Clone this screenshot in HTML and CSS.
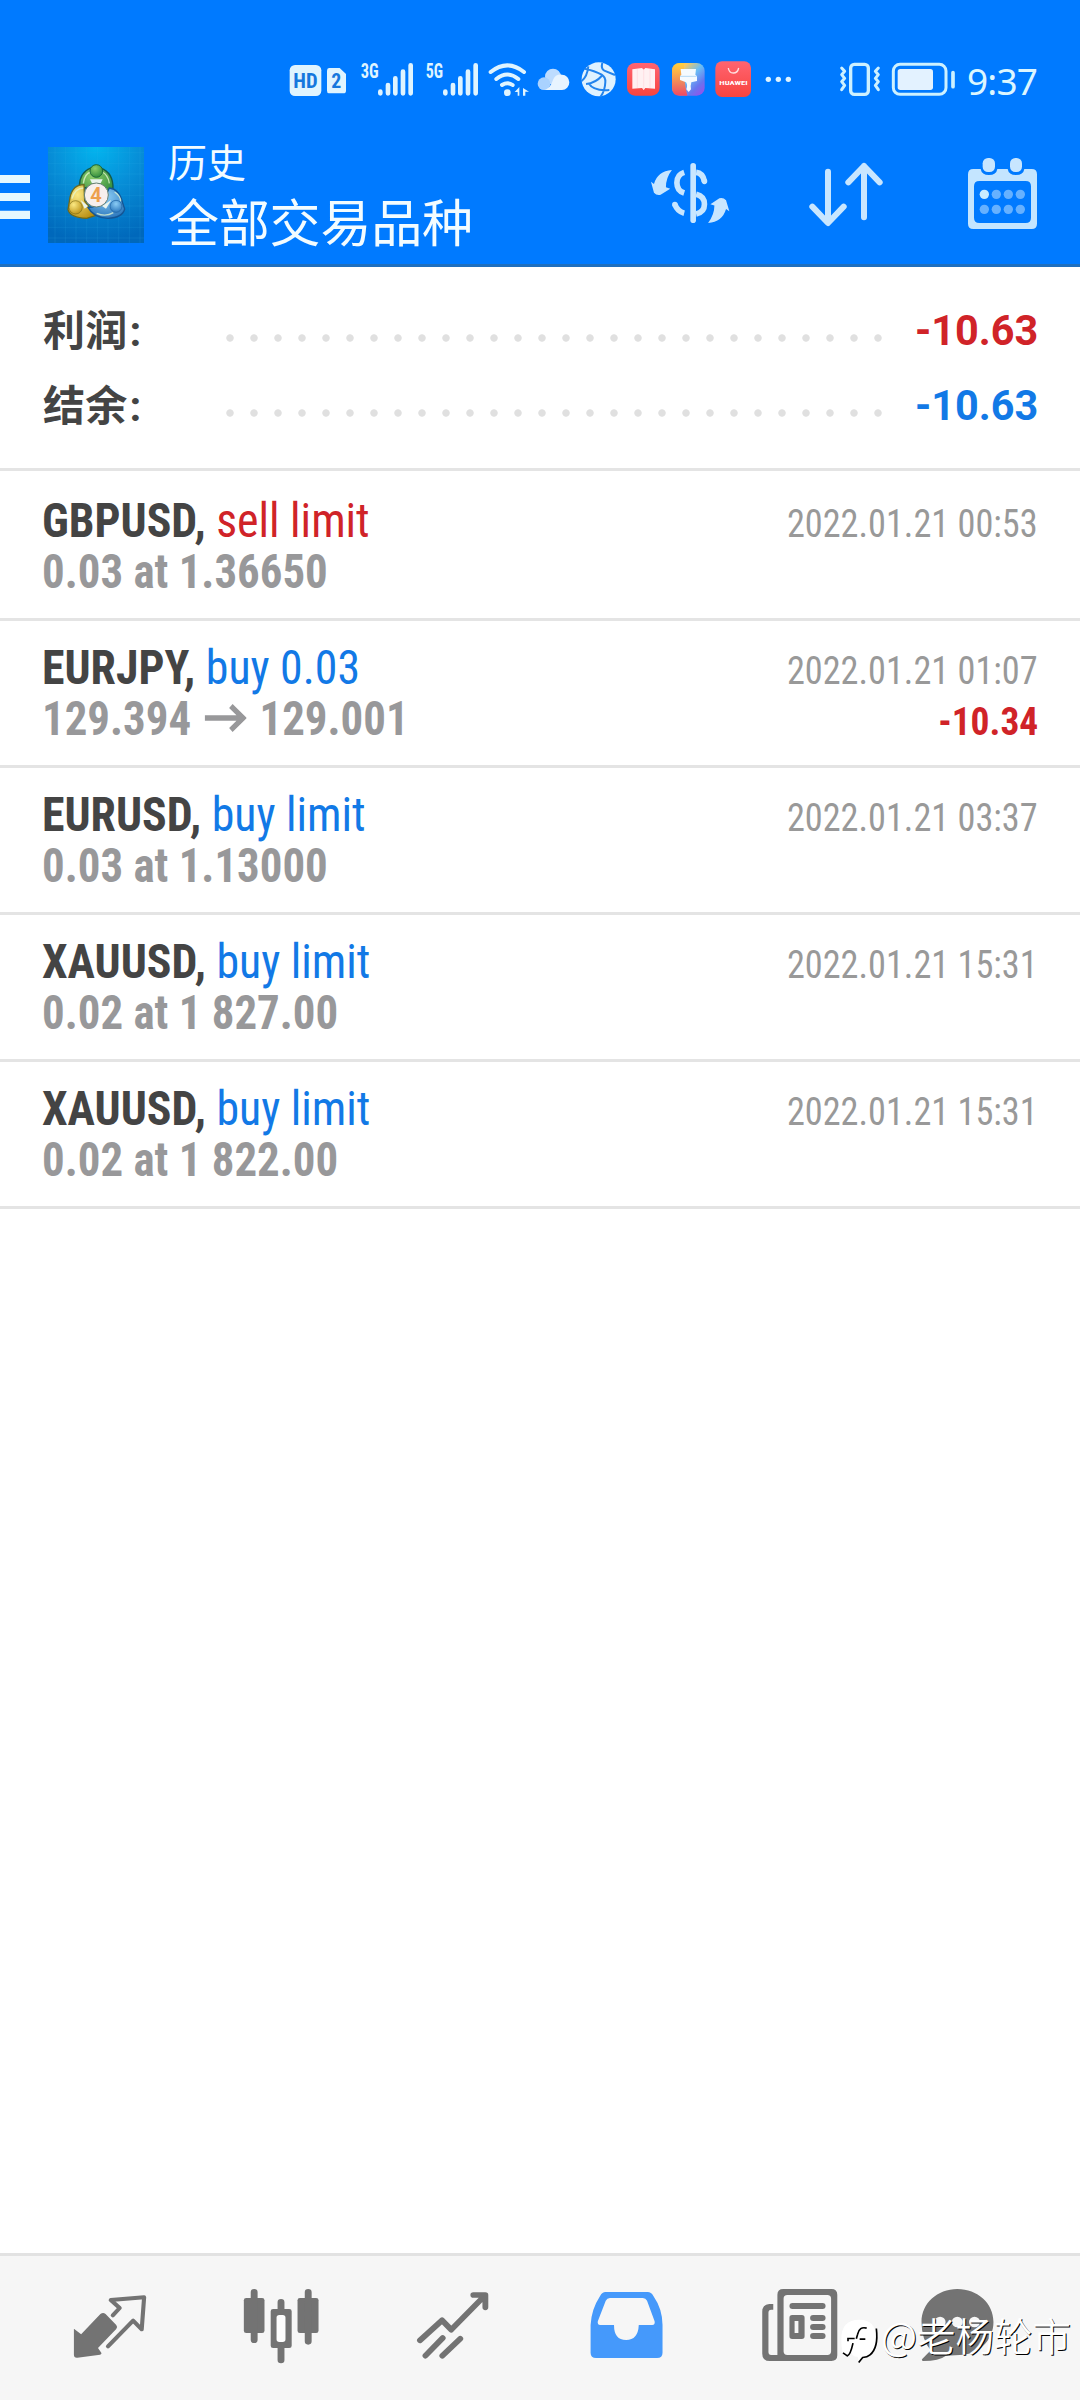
FILE: index.html
```html
<!DOCTYPE html>
<html lang="zh-CN">
<head>
<meta charset="utf-8">
<title>历史</title>
<link rel="stylesheet" href="styles.css">
</head>
<body>
<div class="screen">
  <div class="statusbar">
    <svg class="status-left" viewBox="48 0 729 240" fill="#dff4ff">
      <rect x="59" y="75" width="95" height="93" rx="16"/>
      <text x="70" y="144" font-size="58" font-weight="700" fill="#1577dd" textLength="73" lengthAdjust="spacingAndGlyphs">HD</text>
      <path d="M177 84h32l19 18v50q0 8-8 8h-43q-6 0-6-8v-60q0-8 6-8z"/>
      <text x="184" y="145" font-size="60" font-weight="700" fill="#1577dd" textLength="30" lengthAdjust="spacingAndGlyphs">2</text>
      <text x="272" y="113" font-size="58" font-weight="700" textLength="54" lengthAdjust="spacingAndGlyphs">3G</text>
      <text x="467" y="113" font-size="58" font-weight="700" textLength="52" lengthAdjust="spacingAndGlyphs">5G</text>
      <g stroke="#dff4ff" stroke-width="14" stroke-linecap="round">
        <path d="M331 155v5M354 135v25M376 115v45M399 95v65M422 76v84M526 155v5M549 135v25M571 115v45M594 95v65M617 76v84"/>
        <path d="M662 96q50-40 100 0M679 117q33-27 66 0M696 135q17-11 32 0" fill="none" stroke-width="12"/>
      </g>
      <circle cx="712" cy="158" r="10"/>
      <path d="M734 156l14-15v26h-5v-11zM759 144l18 11h-11v12h-7z"/>
    </svg>
    <svg class="status-apps" viewBox="0 0 810 240">
      <defs>
        <linearGradient id="red" x2="0" y2="1"><stop stop-color="#ff6470"/><stop offset="1" stop-color="#f8443f"/></linearGradient>
        <linearGradient id="theme" x2="1" y2="1"><stop stop-color="#ffb12d"/><stop offset=".22" stop-color="#ffc957"/><stop offset=".5" stop-color="#69bdf5"/><stop offset=".75" stop-color="#6875ef"/><stop offset="1" stop-color="#a347e8"/></linearGradient>
        <linearGradient id="warm" x2="0" y2="1"><stop stop-color="#ffd43b" stop-opacity=".8"/><stop offset="1" stop-color="#f04863"/></linearGradient>
      </defs>
      <circle cx="69" cy="110" r="24" fill="#bddcff"/><circle cx="42" cy="131" r="19" fill="#a9d2ff"/>
      <path d="M42 150h54a22 23 0 0 0 0-46q-20-2-27 16-8 26-27 30z" fill="#e8f4ff"/>
      <circle cx="206" cy="118" r="51" fill="#dff2ff"/>
      <path d="M164 86q30 6 51 18 12 8 11 22-1 26-14 44M175 79q-3 30-20 44M168 132q28-2 50-27M217 68q-5 18 6 24l32 13M176 130q14 24 62 20" fill="none" stroke="#2384ed" stroke-width="6"/>
      <rect x="291" y="69" width="98" height="98" rx="24" fill="url(#red)"/>
      <path d="M307 88l29-4 5 5 5-5 29 4v58l-29-2-5 6-5-6-29 2z" fill="#fff1f2"/><path d="M322 87v57M341 88v61M360 87v57" stroke="#ffd8dc" stroke-width="2"/>
      <rect x="426" y="69" width="98" height="98" rx="24" fill="url(#theme)"/>
      <path d="M450 69q-24 0-24 24v50q0 24 24 24h22q-12-48-10-98z" fill="url(#warm)"/>
      <path d="M452 87h46l-2 17 5 5v14l-17 4q-3 9-1 21l-7 8-7-8q5-13-1-21l-18-7v-11l4-5z" fill="#f5fbff"/>
      <path d="M450 109h50" stroke="#b4d9f6" stroke-width="3"/>
      <rect x="556" y="64" width="107" height="107" rx="20" fill="url(#red)"/>
      <path d="M595 84q2 15 15 15t16-15" fill="none" stroke="#ffe0df" stroke-width="4"/>
      <text x="568" y="134" font-size="18" font-weight="700" fill="#fff" textLength="85" lengthAdjust="spacingAndGlyphs">HUAWEI</text>
      <g fill="#dff4ff"><circle cx="715" cy="118" r="8"/><circle cx="745" cy="118" r="8"/><circle cx="775" cy="118" r="8"/></g>
    </svg>
    <svg class="status-right" viewBox="108 0 372 240" fill="none" stroke="#cdf1ff">
      <rect x="152" y="73" width="53" height="90" rx="11" stroke-width="10"/>
      <path d="M125 84l9 10-9 10 9 11-9 10 9 11-9 13M235 84l-9 10 9 10-9 11 9 10-9 11 9 13" stroke-width="9" stroke-linecap="round" stroke-linejoin="round"/>
      <rect x="280" y="73" width="158" height="90" rx="20" stroke-width="9"/>
      <rect x="293" y="87" width="106" height="63" rx="8" fill="#e3f2ff" stroke="none"/>
      <path d="M459 98v42" stroke-width="11" stroke-linecap="round"/>
    </svg>
    <span class="clock">9:37</span>
  </div>

  <header class="header">
    <svg class="menu" viewBox="0 0 90 432" fill="#e6f8ff"><path d="M0 165h90v24H0zM0 219h90v24H0zM0 272h90v25H0z"/></svg>
    <svg class="logo" viewBox="144 81 288 288">
      <defs>
        <radialGradient id="lbg" cx=".5" cy="0" r="1"><stop stop-color="#02b5ef"/><stop offset=".45" stop-color="#078fd8"/><stop offset="1" stop-color="#0068bb"/></radialGradient>
        <radialGradient id="gg" cx=".4" cy=".3" r=".8"><stop stop-color="#8fce6c"/><stop offset="1" stop-color="#278536"/></radialGradient>
        <radialGradient id="yg" cx=".35" cy=".3" r=".8"><stop stop-color="#fbe983"/><stop offset="1" stop-color="#b98d10"/></radialGradient>
        <radialGradient id="bg" cx=".5" cy=".3" r=".8"><stop stop-color="#8accf5"/><stop offset="1" stop-color="#1f6cb5"/></radialGradient>
      </defs>
      <path d="M144 81h288v288H144z" fill="url(#lbg)"/>
      <path d="M165 81v288M196 81v288M228 81v288M260 81v288M292 81v288M324 81v288M356 81v288M388 81v288M420 81v288M144 98h288M144 130h288M144 162h288M144 194h288M144 226h288M144 258h288M144 290h288M144 322h288M144 354h288" stroke="#35b5e9" stroke-opacity=".22" stroke-width="2"/>
      <g stroke-width="4">
        <path d="M238 200q0-42 34-56h30q38 14 37 62l-12 22-38-32-34 8z" fill="url(#gg)" stroke="#155b48"/>
        <path d="M252 194q-34 0-42 38l-6 37q6 24 56 26l26-8-32-45z" fill="url(#yg)" stroke="#6c691e"/>
        <path d="M264 262q36 4 64-58 30 3 40 45l6 18q-6 26-50 28-44-2-60-33z" fill="url(#bg)" stroke="#145594"/>
        <path d="M250 190q4-29 22-34M306 156q18 8 22 34M216 236q9-32 34-32M290 280q27 12 50-2M344 216q18 12 18 28" fill="none" stroke="#e7f8d2" stroke-opacity=".75"/>
        <path d="M270 178h38l-6 12h-26zM242 240l12 26 10-8zM334 240l-16 26-12-8z" fill="#e9f4ee" stroke="none"/>
      </g>
      <circle cx="289" cy="153" r="19" fill="url(#gg)" stroke="#1c6838" stroke-width="3"/>
      <circle cx="227" cy="262" r="20" fill="url(#yg)" stroke="#7b6c19" stroke-width="2"/>
      <circle cx="348" cy="259" r="18" fill="url(#bg)" stroke="#1b5f9f" stroke-width="2"/>
      <circle cx="289" cy="225" r="36" fill="#f7efed" stroke="#647f74" stroke-width="3"/>
      <text x="270" y="245" font-size="60" fill="#eda04e" font-weight="500" textLength="36" lengthAdjust="spacingAndGlyphs">4</text>
    </svg>
    <div class="titles">
      <div class="title-small">历史</div>
      <div class="title-main">全部交易品种</div>
    </div>
    <div class="actions">
      <svg class="act-money" viewBox="80 -30 259 432" fill="#c8e6ff">
        <path d="M155 120q-43 3-54 42l-9-7 9 33q8 9 20 6l29-18-13-4q0-29 18-52zM264 279q43-3 54-42l10 7-10-33q-8-9-20-6l-27 18 12 4q0 28-19 52z"/>
        <g fill="none" stroke="#c8e6ff" stroke-width="17">
          <path d="M192 127q-22 7-22 31t22 31M192 250q-20-5-28-26"/>
          <path d="M164 224v0M253 154v0" stroke-linecap="round"/>
          <path d="M228 127q20 2 25 27M228 193q25 6 25 30t-25 29"/>
          <path d="M219 107v164" stroke-linecap="round"/>
        </g>
      </svg>
      <svg class="act-sort" viewBox="555 -30 264 432" fill="none" stroke="#c8e6ff" stroke-width="18" stroke-linecap="round" stroke-linejoin="round"><path d="M624 125v153M577 230l47 49 47-49M732 262V108M685 157l47-49 47 49"/></svg>
      <svg class="act-cal" viewBox="1035 -30 225 432">
        <path fill="#c4e5ff" fill-rule="evenodd" d="M1060 117h22q3 18 25 18t25-18h31q3 18 25 18t25-18h22q16 0 16 16v148q0 16-16 16h-175q-16 0-16-16V133q0-16 16-16zM1078 153q-16 0-16 16v94q0 16 16 16h139q16 0 16-16v-94q0-16-16-16z"/>
        <rect x="1088" y="84" width="37" height="42" rx="16" fill="#c8e6ff"/><rect x="1170" y="84" width="36" height="42" rx="16" fill="#c8e6ff"/>
        <g fill="#66b1ff"><circle cx="1093" cy="193" r="14" fill="#c8ecff"/><circle cx="1129" cy="193" r="14"/><circle cx="1165" cy="193" r="14"/><circle cx="1201" cy="193" r="14"/><circle cx="1093" cy="238" r="14"/><circle cx="1129" cy="238" r="14"/><circle cx="1165" cy="238" r="14"/><circle cx="1201" cy="238" r="14"/></g>
      </svg>
    </div>
  </header>

  <section class="summary">
    <div class="sum-row"><span class="sum-label">利润<i>:</i></span><span class="dots"></span><span class="sum-value neg">-10.63</span></div>
    <div class="sum-row"><span class="sum-label">结余<i>:</i></span><span class="dots"></span><span class="sum-value pos">-10.63</span></div>
  </section>

  <main class="deals">
    <article class="deal">
      <div class="line"><div class="name"><b>GBPUSD,</b> <span class="neg">sell limit</span></div><time>2022.01.21 00:53</time></div>
      <div class="line"><div class="detail">0.03 at 1.36650</div></div>
    </article>
    <article class="deal">
      <div class="line"><div class="name"><b>EURJPY,</b> <span class="pos">buy 0.03</span></div><time>2022.01.21 01:07</time></div>
      <div class="line"><div class="detail">129.394 <svg class="arrow" viewBox="0 0 45 34" fill="none" stroke="#98989a" stroke-width="5.5"><path d="M0 17h41M28 5l13 12-13 12"/></svg> 129.001</div><div class="profit neg">-10.34</div></div>
    </article>
    <article class="deal">
      <div class="line"><div class="name"><b>EURUSD,</b> <span class="pos">buy limit</span></div><time>2022.01.21 03:37</time></div>
      <div class="line"><div class="detail">0.03 at 1.13000</div></div>
    </article>
    <article class="deal">
      <div class="line"><div class="name"><b>XAUUSD,</b> <span class="pos">buy limit</span></div><time>2022.01.21 15:31</time></div>
      <div class="line"><div class="detail">0.02 at 1 827.00</div></div>
    </article>
    <article class="deal">
      <div class="line"><div class="name"><b>XAUUSD,</b> <span class="pos">buy limit</span></div><time>2022.01.21 15:31</time></div>
      <div class="line"><div class="detail">0.02 at 1 822.00</div></div>
    </article>
  </main>

  <nav class="tabbar">
    <svg viewBox="70 48 500 432" preserveAspectRatio="none" fill="#737373">
      <path d="M215 266l21 17 56-61q8-6 15 0l31 33q5 6 0 12l-53 57 10 15q1 4-4 5l-66 9q-10 1-10-9z"/>
      <path d="M328 226l20-22-26-24 97-8-7 96-25-26-73 77" fill="none" stroke="#737373" stroke-width="12" stroke-linejoin="round" stroke-linecap="round"/>
    </svg>
    <svg viewBox="570 48 500 432" preserveAspectRatio="none" fill="#737373">
      <rect x="709" y="174" width="60" height="105" rx="7"/><rect x="865" y="174" width="61" height="105" rx="7"/>
      <path d="M739 157v142M896 157v147M817 187v30M817 315v45" stroke="#737373" stroke-width="20" stroke-linecap="round"/>
      <path fill="#fdfdfd" d="M800 220h34v90h-34z"/>
      <path fill-rule="evenodd" d="M794 207h47q7 0 7 7v103q0 7-7 7h-47q-7 0-7-7V214q0-7 7-7zM812 225q-8 0-8 8v65q0 8 8 8h10q8 0 8-8v-65q0-8-8-8z"/>
    </svg>
    <svg viewBox="1070 48 500 432" preserveAspectRatio="none" fill="none" stroke="#737373" stroke-width="17" stroke-linecap="round" stroke-linejoin="round">
      <path d="M1221 301l64-60 27 28 98-103M1376 165h35v37M1237 347l50-53M1286 347l52-51"/>
    </svg>
    <svg viewBox="0 48 500 432" preserveAspectRatio="none">
      <path fill="#4599fb" fill-rule="evenodd" d="M190 156h123q10 0 16 11 27 40 27 88v83q0 16-16 16H163q-16 0-16-16v-83q2-47 28-88 6-11 15-11zM203 174q-8 0-12 8l-23 62q-2 11 7 11h40q0 45 35 45t37-45h39q9 0 7-11l-22-62q-4-8-12-8z"/>
    </svg>
    <svg viewBox="500 48 500 432" preserveAspectRatio="none" fill="#737373">
      <path fill-rule="evenodd" d="M707 147h140q17 0 17 17v182q0 17-17 17H668q-22 0-22-22V215q0-21 20-23h12v17h-6q-8 0-8 9v118q0 9 8 9h18V164q0-17 17-17zM719 165q-11 0-11 11v158q0 11 11 11h116q11 0 11-11V176q0-11-11-11z"/>
      <rect x="725" y="189" width="105" height="18" rx="9"/>
      <path fill-rule="evenodd" d="M733 225h28q8 0 8 8v56q0 8-8 8h-28q-8 0-8-8v-56q0-8 8-8zM740 243v36h11v-36z"/>
      <rect x="785" y="225" width="45" height="18" rx="9"/><rect x="785" y="252" width="45" height="18" rx="9"/><rect x="785" y="279" width="45" height="18" rx="9"/>
    </svg>
    <svg viewBox="1000 48 500 432" preserveAspectRatio="none">
      <path fill="#737373" d="M1213 147c59 0 105 43 105 99 0 55-43 99-98 99l-40 2q-20 16-66 16-6-1-3-6l25-26q-27-32-27-85c0-56 46-99 104-99z"/>
      <g fill="#f6f6f6"><circle cx="1163" cy="246" r="16"/><circle cx="1213" cy="246" r="16"/><circle cx="1263" cy="246" r="16"/></g>
    </svg>
  </nav>

  <div class="watermark">
    <svg viewBox="60 112 120 140">
      <path fill="#fff" d="M64 178q0-58 54-58 50 0 50 54 0 50-42 58l-10 12-3-13q-18-1-18-14l-22 14q-9-15-9-53z"/>
      <path d="M140 145q-22-6-27 18l-4 14M84 184v-8h20M119 178h17M99 190q-8 36-17 38l-13-9" fill="none" stroke="#000" stroke-width="5"/>
      <path d="M169 146q7 58-19 79-8 7-22 8l-12 15" fill="none" stroke="#000" stroke-width="5"/>
    </svg>
    <span>@老杨轮市</span>
  </div>
</div>
</body>
</html>
```
FILE: styles.css
```css
* { box-sizing: border-box; }
body { margin: 0; background: #fff; }
svg { display: block; flex: none; }
.screen {
  position: relative;
  display: flex;
  flex-direction: column;
  width: 1080px;
  height: 2400px;
  overflow: hidden;
  background: #fff;
  font-family: "Roboto Condensed", Roboto, "Noto Sans CJK SC", sans-serif;
}
.neg { color: #d02328; }
.pos { color: #1279e6; }

.statusbar {
  display: flex;
  height: 120px;
  padding: 40px 0 0 286px;
  background: #007aff;
}
.statusbar svg { height: 80px; }
.status-left { width: 243px; margin-right: 1px; }
.status-apps { width: 270px; margin-right: 36px; }
.status-right { width: 124px; margin-right: 7px; }
.clock {
  font: 400 37px/80px "Noto Sans", sans-serif;
  letter-spacing: -.8px;
  color: #dcf6ff;
  padding-top: 1px;
}

.header {
  display: flex;
  align-items: flex-start;
  height: 147px;
  padding-right: 40px;
  background: #007aff;
  border-bottom: 3px solid #1f6fbe;
}
.menu { width: 30px; height: 144px; }
.logo { width: 96px; height: 96px; margin: 27px 24px 0 18px; }
.titles { color: #f3fcff; font-family: "Noto Sans CJK SC", sans-serif; }
.title-small { font-size: 39px; line-height: 48px; padding-top: 16px; }
.title-main { font-size: 51px; line-height: 60px; padding-top: 6px; letter-spacing: -.2px; }
.actions { display: flex; gap: 72px; margin-left: auto; }
.actions svg { height: 144px; }
.act-money { width: 86px; }
.act-sort { width: 88px; }
.act-cal { width: 75px; }

.summary {
  height: 204px;
  padding: 26px 42px 0;
  border-bottom: 3px solid #e4e4e4;
}
.sum-row { display: flex; align-items: center; height: 75px; font: 700 42px/75px Roboto, "Noto Sans CJK SC", sans-serif; }
.sum-label { width: 176px; padding: 2px 0 0 1px; color: #444; letter-spacing: .2px; }
.sum-label i { font-style: normal; margin-left: 2px; }
.dots {
  width: 672px;
  height: 24px;
  margin-top: 15px;
  background: radial-gradient(circle, #e0e0e0 3.3px, transparent 4.1px) 0 0 / 24px 24px;
}
.sum-value { margin-left: auto; transform: scaleX(.985); transform-origin: right; }

.deal { height: 147px; padding: 21px 42px 0; border-bottom: 3px solid #e4e4e4; }
.deal:first-child { height: 150px; padding-top: 24px; }
.line { display: flex; justify-content: space-between; align-items: baseline; height: 51px; line-height: 51px; }
.name { font-size: 48px; color: #444; transform: scaleX(.954); transform-origin: left; }
.detail { font-size: 48px; font-weight: 700; color: #98989a; white-space: pre; transform: scaleX(.935); transform-origin: left; }
.arrow { display: inline-block; width: 45px; height: 34px; margin: 0 3px; }
time { font-size: 39px; color: #999; transform: scaleX(.93); transform-origin: right; }
.profit { font-size: 39px; font-weight: 700; transform: scaleX(.96); transform-origin: right; }

.tabbar {
  display: flex;
  height: 147px;
  margin-top: auto;
  padding-left: 23.5px;
  background: #f6f6f6;
  border-top: 3px solid #e2e2e2;
}
.tabbar svg { width: 172.1px; height: 144px; }

.watermark {
  position: absolute;
  left: 840px;
  top: 2308px;
  display: flex;
  gap: 1px;
  color: #fff;
  font: 350 38.5px/52px "Noto Sans CJK SC", sans-serif;
  text-shadow: 1px 1px 0 #000;
}
.watermark svg { width: 40px; height: 47px; margin-top: 9px; }
```
